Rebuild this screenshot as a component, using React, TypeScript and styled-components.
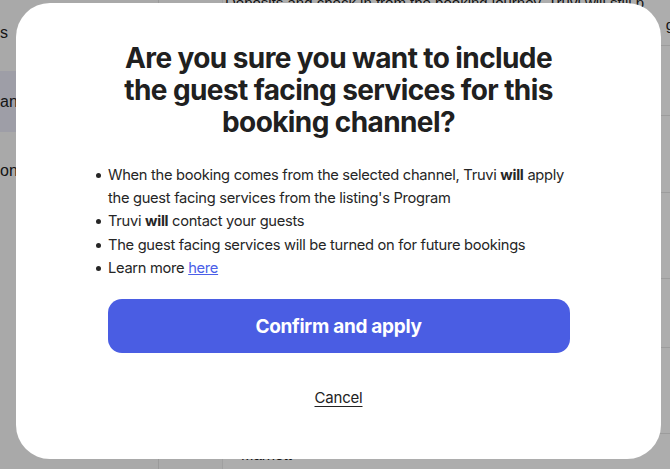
import styled, { createGlobalStyle } from 'styled-components';

const GlobalStyle = createGlobalStyle`
  html, body {
    margin: 0;
    padding: 0;
    width: 670px;
    height: 469px;
    overflow: hidden;
    font-family: 'Liberation Sans', Arial, sans-serif;
  }
`;

const fontFamily = `Inter, 'Noto Sans', sans-serif`;

// ---------- page behind the modal ----------

const Page = styled.div`
  display: flex;
  width: 670px;
  height: 469px;
  background: #fff;
  overflow: hidden;
`;

const Sidebar = styled.nav`
  width: 158px;
  flex-shrink: 0;
  background: #fafafa;
  border-right: 1px solid #e4e4e4;
  padding-top: 2px;
  display: flex;
  flex-direction: column;
  gap: 8px;
`;

const SideItem = styled.div<{ $active?: boolean }>`
  height: 61px;
  display: flex;
  align-items: center;
  font-size: 16px;
  color: #222;
  white-space: nowrap;
  background: ${(p) => (p.$active ? '#e9e9f7' : 'transparent')};
`;

const NarrowColumn = styled.div`
  width: 63px;
  flex-shrink: 0;
  background: #fbfbfb;
  border-right: 1px solid #ececec;
`;

const Table = styled.div`
  flex: 1;
  display: flex;
  flex-direction: column;
  margin-top: -18px;
`;

const TableRow = styled.div<{ $h: number }>`
  height: ${(p) => p.$h}px;
  flex-shrink: 0;
  border-bottom: 1px solid #e6e6e6;
  padding: 10px 0 0 18px;
  box-sizing: border-box;
  font-size: 15px;
  line-height: 22px;
  color: #222;
  white-space: nowrap;
`;

const TopRow = styled(TableRow)`
  padding-left: 2px;
`;

const RowNote = styled.div`
  text-align: right;
  margin-right: -4px;
`;

// ---------- modal ----------

const Overlay = styled.div`
  position: fixed;
  inset: 0;
  background: rgba(0, 0, 0, 0.32);
  display: flex;
  align-items: flex-start;
  padding: 3px 0 0 16px;
`;

const ModalContent = styled.div`
  width: 645px;
  height: 456px;
  box-sizing: border-box;
  background: #fff;
  border-radius: 34px;
  display: flex;
  flex-direction: column;
  align-items: center;
  padding: 39px 0 0;
  font-family: ${fontFamily};
  color: #222;
`;

const ModalTitle = styled.h2`
  margin: 0;
  width: 460px;
  text-align: center;
  font-size: 28px;
  line-height: 32px;
  font-weight: 700;
  letter-spacing: -0.6px;
  color: #202020;
`;

const BulletList = styled.ul`
  margin: 26px 0 0;
  padding: 0;
  width: 461px;
  list-style: none;
  font-size: 14.7px;
  line-height: 23.2px;
  letter-spacing: -0.3px;
  color: #262626;
`;

const Bullet = styled.li`
  position: relative;
  &::before {
    content: '';
    position: absolute;
    left: -12px;
    top: 9px;
    width: 5px;
    height: 5px;
    border-radius: 50%;
    background: #262626;
  }
  b {
    font-weight: 700;
  }
`;

const Link = styled.a`
  color: #4b5fe8;
  text-decoration: underline;
`;

const ConfirmButton = styled.button`
  margin-top: 19px;
  width: 462px;
  height: 54px;
  border: none;
  border-radius: 14px;
  background: #4a5de3;
  color: #fff;
  font-family: ${fontFamily};
  font-size: 19px;
  font-weight: 700;
  letter-spacing: -0.3px;
  cursor: pointer;
`;

const CancelButton = styled.button`
  margin-top: 35px;
  border: none;
  background: none;
  padding: 0;
  font-family: ${fontFamily};
  font-size: 15px;
  letter-spacing: -0.2px;
  color: #222;
  text-decoration: underline;
  text-underline-offset: 3px;
  cursor: pointer;
`;

export default function App() {
  return (
    <>
      <GlobalStyle />
      <Page>
        <Sidebar>
          <SideItem>s</SideItem>
          <SideItem $active>an</SideItem>
          <SideItem>on</SideItem>
        </Sidebar>
        <NarrowColumn />
        <Table>
          <TopRow $h={64}>
            Deposits and check in from the booking journey. Truvi will still p
            <RowNote>g</RowNote>
          </TopRow>
          <TableRow $h={70} />
          <TableRow $h={77} />
          <TableRow $h={86} />
          <TableRow $h={69} />
          <TableRow $h={86} />
          <TableRow $h={60}>Marriott</TableRow>
        </Table>
      </Page>

      <Overlay>
        <ModalContent>
          <ModalTitle>
            Are you sure you want to include the guest facing services for this
            booking channel?
          </ModalTitle>

          <BulletList>
            <Bullet>
              When the booking comes from the selected channel, Truvi <b>will</b> apply
              the guest facing services from the listing's Program
            </Bullet>
            <Bullet>
              Truvi <b>will</b> contact your guests
            </Bullet>
            <Bullet>The guest facing services will be turned on for future bookings</Bullet>
            <Bullet>
              Learn more <Link href="#">here</Link>
            </Bullet>
          </BulletList>

          <ConfirmButton>Confirm and apply</ConfirmButton>
          <CancelButton>Cancel</CancelButton>
        </ModalContent>
      </Overlay>
    </>
  );
}
